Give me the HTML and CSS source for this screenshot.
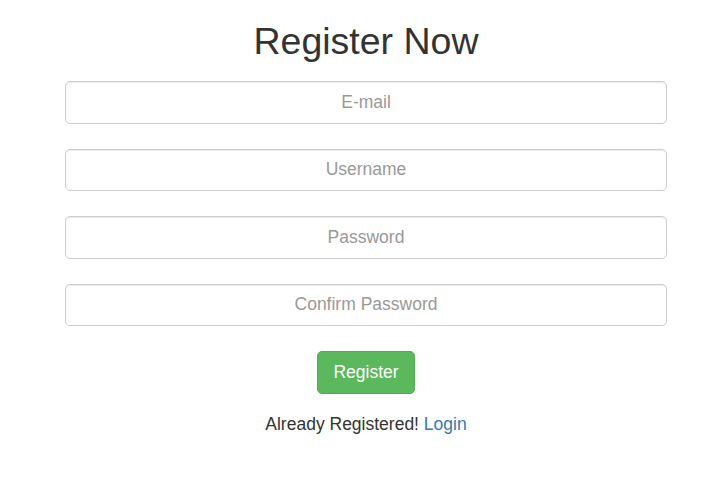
FILE: index.html
```html
<!DOCTYPE html>
<html lang="en">
<head>
<meta charset="utf-8">
<title>Register Now</title>
<link rel="stylesheet" href="styles.css">
</head>
<body>
<div class="page">
  <h2 class="title">Register Now</h2>
  <form class="form">
    <input class="field" type="email" placeholder="E-mail">
    <input class="field" type="text" placeholder="Username">
    <input class="field" type="password" placeholder="Password">
    <input class="field" type="password" placeholder="Confirm Password">
    <button class="btn" type="button">Register</button>
    <p class="note">Already Registered! <a class="link" href="#">Login</a></p>
  </form>
</div>
</body>
</html>
```
FILE: styles.css
```css
html, body {
  margin: 0;
  padding: 0;
  background: #ffffff;
}
body {
  font-family: "Liberation Sans", Arial, Helvetica, sans-serif;
  font-size: 17.5px;
  line-height: 1.42857;
  color: #333333;
}
.page {
  width: 602px;
  margin-left: 65px;
  display: flex;
  flex-direction: column;
  align-items: center;
}
.title {
  margin: 21px 0 18.75px;
  font-size: 37.5px;
  font-weight: 500;
  line-height: 1.1;
  color: #333333;
}
.form {
  width: 100%;
  display: flex;
  flex-direction: column;
  align-items: center;
  gap: 25px;
}
.field {
  box-sizing: border-box;
  width: 100%;
  height: 42.5px;
  padding: 7.5px 15px;
  font-family: inherit;
  font-size: 17.5px;
  color: #555555;
  text-align: center;
  background: #ffffff;
  border: 1px solid #cccccc;
  border-radius: 5px;
  box-shadow: inset 0 1px 1px rgba(0, 0, 0, 0.075);
  outline: none;
}
.field::placeholder {
  color: #999999;
  opacity: 1;
}
.btn {
  box-sizing: border-box;
  height: 42.5px;
  padding: 7.5px 15px;
  font-family: inherit;
  font-size: 17.5px;
  line-height: 1.42857;
  color: #ffffff;
  background: #5cb85c;
  border: 1px solid #4cae4c;
  border-radius: 5px;
  cursor: pointer;
}
.note {
  margin: -7px 0 0;
  text-align: center;
}
.link {
  color: #337ab7;
  text-decoration: none;
}
```
